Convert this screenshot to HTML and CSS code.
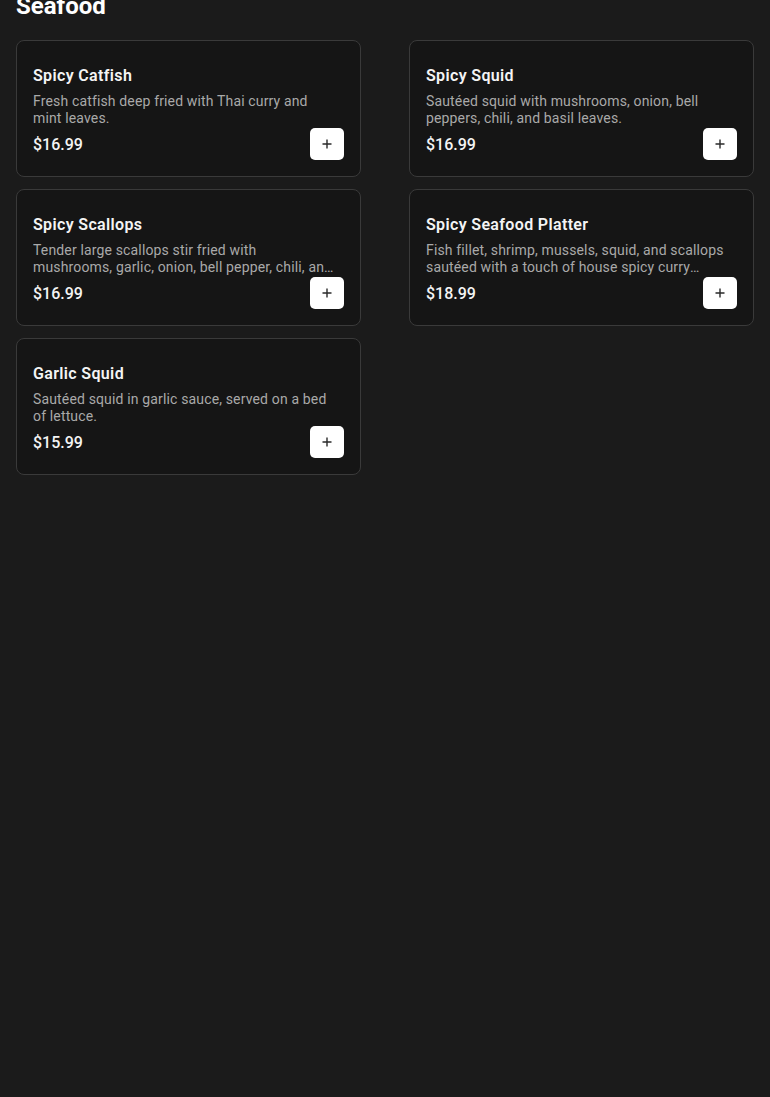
FILE: index.html
```html
<!DOCTYPE html>
<html>
<head>
<meta charset="utf-8">
<link rel="stylesheet" href="styles.css">
</head>
<body>
<section class="section">
  <h2 class="section-title">Seafood</h2>
  <div class="grid">
    <div class="card">
      <h3 class="name">Spicy Catfish</h3>
      <p class="desc">Fresh catfish deep fried with Thai curry and mint leaves.</p>
      <div class="row">
        <span class="price">$16.99</span>
        <button class="add"><svg width="10" height="10" viewBox="0 0 10 10"><path d="M5 0.5V9.5M0.5 5H9.5" stroke="#2a2a2a" stroke-width="1.4"/></svg></button>
      </div>
    </div>
    <div class="card">
      <h3 class="name">Spicy Squid</h3>
      <p class="desc">Sautéed squid with mushrooms, onion, bell peppers, chili, and basil leaves.</p>
      <div class="row">
        <span class="price">$16.99</span>
        <button class="add"><svg width="10" height="10" viewBox="0 0 10 10"><path d="M5 0.5V9.5M0.5 5H9.5" stroke="#2a2a2a" stroke-width="1.4"/></svg></button>
      </div>
    </div>
    <div class="card">
      <h3 class="name">Spicy Scallops</h3>
      <p class="desc"><span class="line">Tender large scallops stir fried with</span><span class="line">mushrooms, garlic, onion, bell pepper, chili, and basil leaves.</span></p>
      <div class="row">
        <span class="price">$16.99</span>
        <button class="add"><svg width="10" height="10" viewBox="0 0 10 10"><path d="M5 0.5V9.5M0.5 5H9.5" stroke="#2a2a2a" stroke-width="1.4"/></svg></button>
      </div>
    </div>
    <div class="card">
      <h3 class="name">Spicy Seafood Platter</h3>
      <p class="desc">Fish fillet, shrimp, mussels, squid, and scallops sautéed with a touch of house spicy curry sauce.</p>
      <div class="row">
        <span class="price">$18.99</span>
        <button class="add"><svg width="10" height="10" viewBox="0 0 10 10"><path d="M5 0.5V9.5M0.5 5H9.5" stroke="#2a2a2a" stroke-width="1.4"/></svg></button>
      </div>
    </div>
    <div class="card">
      <h3 class="name">Garlic Squid</h3>
      <p class="desc">Sautéed squid in garlic sauce, served on a bed of lettuce.</p>
      <div class="row">
        <span class="price">$15.99</span>
        <button class="add"><svg width="10" height="10" viewBox="0 0 10 10"><path d="M5 0.5V9.5M0.5 5H9.5" stroke="#2a2a2a" stroke-width="1.4"/></svg></button>
      </div>
    </div>
  </div>
</section>
</body>
</html>
```
FILE: styles.css
```css
html, body {
  margin: 0;
  padding: 0;
  background: #1b1b1b;
  font-family: Roboto, "Noto Sans", sans-serif;
  color: #f2f2f2;
}
body {
  height: 1097px;
  overflow: hidden;
}
.section {
  padding: 0 16px;
}
.section-title {
  margin: -10px 0 18px;
  font-size: 24px;
  line-height: 32px;
  font-weight: 700;
  color: #ffffff;
}
.grid {
  display: grid;
  grid-template-columns: minmax(0, 1fr) minmax(0, 1fr);
  column-gap: 48px;
  row-gap: 12px;
  align-items: start;
}
.card {
  min-width: 0;
  background: #151515;
  border: 1px solid #3a3a3a;
  border-radius: 8px;
  padding: 23px 16px 16px;
  display: flex;
  flex-direction: column;
}
.name {
  margin: 0;
  font-size: 16px;
  line-height: 24px;
  font-weight: 600;
  color: #f4f4f4;
  letter-spacing: 0.35px;
}
.desc {
  margin: 5px 9px 1px 0;
  font-size: 14px;
  line-height: 17px;
  color: #a9a9a9;
  letter-spacing: 0.15px;
  display: -webkit-box;
  -webkit-line-clamp: 2;
  -webkit-box-orient: vertical;
  overflow: hidden;
  height: 34px;
  min-width: 0;
}
.line {
  display: block;
  white-space: nowrap;
  overflow: hidden;
  text-overflow: ellipsis;
}
.row {
  display: flex;
  align-items: center;
  justify-content: space-between;
  height: 32px;
}
.price {
  font-size: 16px;
  font-weight: 500;
  color: #f4f4f4;
}
.add {
  width: 34px;
  height: 32px;
  border: none;
  border-radius: 5px;
  background: #ffffff;
  display: flex;
  align-items: center;
  justify-content: center;
  padding: 0;
  cursor: pointer;
}
```
